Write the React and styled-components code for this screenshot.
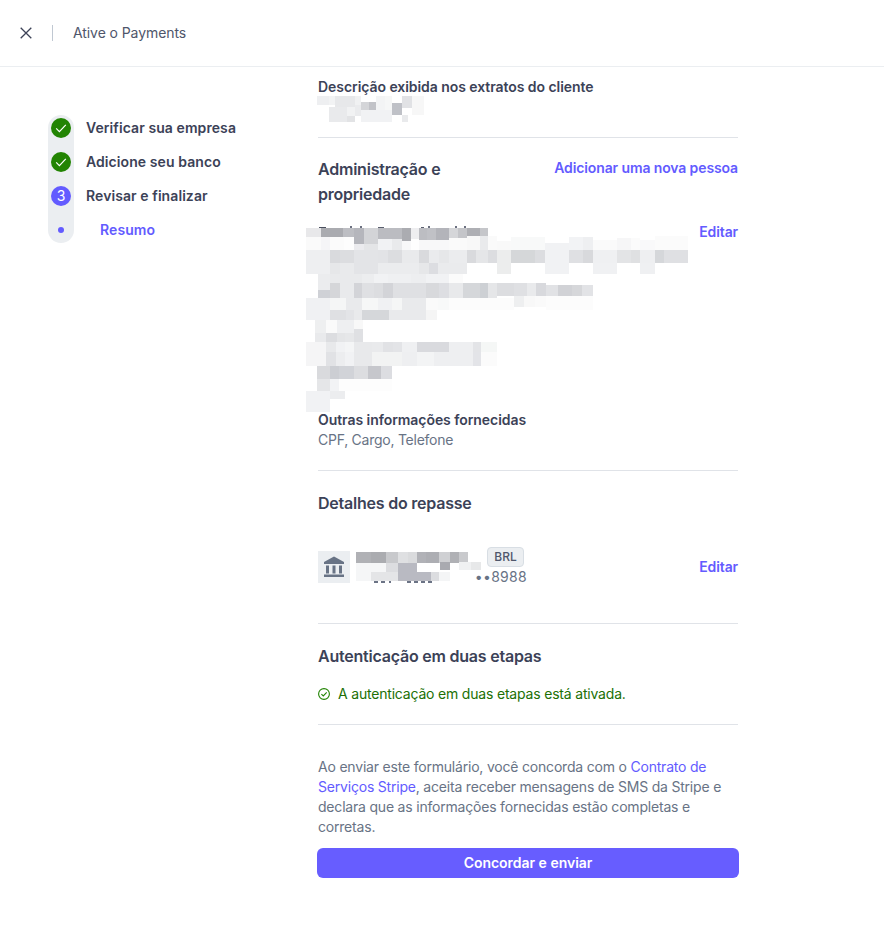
import React from "react";
import styled, { createGlobalStyle } from "styled-components";

// blurred areas of the screenshot: [y1, y2, [x1, x2, colour, y1?, y2?], ...] in page coordinates
const descBlur = [
  [96, 105, [317, 329, "#eeeff1"], [329, 335, "#f2f3f4"], [335, 355, "#e7e8ea", 96, 107], [355, 361, "#f0f1f2"], [376, 385, "#f3f4f5", 96, 110], [385, 392, "#f6f7f7", 96, 110], [402, 412, "#e1e2e5", 96, 108], [412, 424, "#f7f7f7", 96, 115]],
  [102, 110, [361, 369, "#d4d5d8"], [369, 376, "#c2c3c8"], [392, 402, "#bfc1c7", 103, 115]],
  [107, 122, [329, 347, "#e9eaec"], [347, 355, "#f1f2f3", 107, 116], [355, 361, "#eaebed", 105, 116], [361, 392, "#f1f2f4", 110, 122], [347, 355, "#e2e3e5", 116, 122], [402, 408, "#e9eaec", 115, 122]],
];

const personBlur = [
  [226, 228, [319, 326, "#4a4f5e", 227, 228], [350, 352, "#6b7080", 226, 228], [360, 362, "#6b7080", 226, 228], [378, 384, "#5a5f6e", 227, 228], [421, 424, "#5a5f6e", 227, 228], [428, 430, "#6b7080", 226, 228], [455, 457, "#6b7080", 226, 228], [464, 466, "#6b7080", 226, 228]],
  [228, 237, [306, 321, "#e8e8ea"], [321, 343, "#aaabb0"], [343, 354, "#bdbec3"], [354, 364, "#b5b6bc", 228, 244], [364, 378, "#d3d4d7", 228, 244], [378, 402, "#bbbcc1", 228, 239], [402, 411, "#abacb1", 228, 241], [411, 419, "#eeeef0", 228, 239], [419, 427, "#bcbdc2", 228, 240], [427, 436, "#c0c1c6", 228, 240], [436, 449, "#b3b4ba", 228, 240], [449, 458, "#d5d6d9", 228, 238], [458, 467, "#c4c5c9", 228, 238], [467, 480, "#aeafb4", 228, 236], [480, 488, "#c5c6ca", 228, 236]],
  [237, 250, [306, 321, "#fafafa"], [321, 330, "#f5f5f7"], [330, 344, "#fbfbfb"], [344, 354, "#fdfdfd"], [354, 364, "#ebebee", 244, 250], [364, 378, "#e4e5e7", 244, 250], [378, 392, "#f1f2f4", 239, 250], [392, 402, "#e9eaec", 239, 250], [402, 411, "#f8f8f9", 241, 250], [411, 419, "#fefefe", 239, 250], [419, 449, "#f8f8f9", 240, 250], [449, 467, "#fafafa", 238, 250], [467, 480, "#f8f8f8", 236, 250], [480, 488, "#e9eaec", 236, 250], [488, 497, "#fafafa", 236, 250], [497, 511, "#f9f9f9", 241, 250], [511, 545, "#f8f9f9"], [545, 569, "#f1f2f4", 243, 250], [569, 583, "#f2f3f5"], [583, 593, "#eeeff1"], [593, 617, "#fafafa", 240, 250], [617, 631, "#f6f6f7", 238, 250], [631, 640, "#fbfbfb", 238, 250], [640, 655, "#f9f9fa", 240, 250], [655, 688, "#fbfbfb", 236, 250]],
  [250, 263, [306, 330, "#eeeff1"], [330, 340, "#d9dadd"], [340, 354, "#dcdde0"], [354, 378, "#e3e4e7"], [378, 388, "#e2e3e6"], [388, 402, "#dcdde0"], [402, 419, "#e9eaec"], [419, 429, "#d9dadd"], [429, 439, "#eaebed"], [439, 449, "#e6e7e9"], [449, 467, "#ebecee"], [467, 476, "#d9dadd"], [476, 488, "#e5e6e8"], [488, 497, "#dcdde0"], [497, 511, "#eceded"], [511, 535, "#d5d7d9"], [535, 545, "#dcdde0"], [545, 569, "#f1f2f4"], [569, 583, "#dfe0e3"], [583, 593, "#d8d9dc"], [593, 617, "#eff0f2"], [617, 631, "#e3e4e6"], [631, 640, "#dfe0e2"], [640, 655, "#eeeff1"], [655, 664, "#d5d7da"], [664, 688, "#dfe0e3"]],
  [263, 274, [306, 330, "#eeeff1"], [330, 340, "#e6e7e9"], [340, 354, "#e9eaec"], [354, 378, "#e3e4e7"], [378, 419, "#ebecee"], [419, 429, "#e6e7e9"], [429, 438, "#dcdde1"], [438, 467, "#eaebed"], [497, 511, "#eceded"], [545, 569, "#f1f2f4"], [593, 617, "#f0f1f3"], [640, 655, "#eff0f2"]],
  [274, 283, [318, 330, "#ebecee", 274, 290], [330, 340, "#e9eaec"], [340, 362, "#e9eaec"], [362, 374, "#ecedef"], [374, 388, "#f1f2f4"], [388, 411, "#eff0f2"], [411, 426, "#edeef0"], [426, 449, "#f1f2f4"], [449, 463, "#fbfbfb"]],
  [283, 298, [318, 330, "#cfd1d6", 290, 298], [330, 340, "#d5d6d9"], [340, 354, "#e9eaec"], [354, 362, "#d3d4d8"], [362, 374, "#dfe0e3"], [374, 383, "#dcdde0"], [383, 393, "#d3d4d8"], [393, 426, "#dfe0e3"], [426, 439, "#d8d9dc"], [439, 449, "#dddee2"], [449, 463, "#e8e9eb"], [463, 480, "#d5d7da"], [480, 488, "#cdd0d4"], [488, 497, "#e5e6e8"], [497, 514, "#dcdde0", 283, 296], [514, 527, "#dfe0e3", 283, 296], [527, 536, "#e9eaec", 283, 296], [536, 546, "#d8d9dd", 283, 296], [546, 558, "#e1e2e5", 285, 296], [558, 572, "#d1d2d6", 285, 296], [572, 582, "#d6d7da", 285, 296], [582, 593, "#e2e3e6", 285, 296]],
  [298, 310, [306, 330, "#f0f1f3"], [330, 346, "#f5f6f6"], [346, 362, "#e9eaec"], [362, 378, "#f6f7f7"], [378, 392, "#f0f1f3"], [392, 402, "#f5f6f6"], [402, 426, "#e9eaec"], [426, 438, "#fafafa"], [438, 449, "#f8f9f9"], [449, 514, "#fcfcfc"], [514, 524, "#eeeff0", 296, 307], [524, 535, "#f8f8f8", 296, 307], [535, 546, "#fafafa", 296, 307], [546, 593, "#fcfcfc", 296, 310]],
  [310, 320, [306, 330, "#f0f1f3"], [330, 346, "#dfe0e3"], [346, 354, "#e3e4e7"], [354, 362, "#e9eaec"], [362, 389, "#d5d7da"], [389, 426, "#e9eaec"], [426, 437, "#f5f5f5"]],
  [320, 333, [315, 326, "#eeeff0"], [326, 337, "#fafafa"], [337, 354, "#eeeff1"], [354, 363, "#f8f8f8", 320, 329]],
  [333, 342, [315, 326, "#e9eaec"], [326, 337, "#dcdde0"], [337, 345, "#e4e5e7"], [345, 354, "#e6e7e9"], [354, 363, "#dfe0e3", 329, 342]],
  [342, 352, [306, 326, "#f5f5f6"], [326, 336, "#e8e9eb"], [336, 345, "#f1f2f4"], [345, 354, "#f4f5f6"], [354, 372, "#e8e9eb"], [372, 383, "#e9eaec"], [383, 393, "#e1e2e5"], [393, 402, "#e3e4e7"], [402, 417, "#eff0f2"], [417, 449, "#d9dade"], [449, 473, "#eeeff1"], [473, 481, "#e3e4e7"], [481, 497, "#f5f7f6"]],
  [352, 366, [306, 326, "#f5f5f6"], [326, 336, "#e1e2e5"], [336, 345, "#ecedef"], [345, 354, "#f1f2f4"], [354, 372, "#e8e9eb"], [372, 402, "#f2f3f3"], [402, 417, "#eeeff1"], [417, 434, "#f3f4f5"], [434, 473, "#eeeff1"], [473, 481, "#e3e4e8"], [481, 497, "#fbfbfb"]],
  [366, 379, [317, 330, "#d9dadd"], [330, 339, "#ccced3"], [339, 354, "#d1d3d8"], [354, 368, "#dcdde0"], [368, 381, "#c6c7cc"], [381, 392, "#dcdde1"]],
  [379, 391, [317, 330, "#e5e6e8"], [330, 339, "#f2f3f5"], [339, 392, "#fdfdfd"]],
  [391, 412, [306, 330, "#f1f2f4"], [330, 345, "#ecedef", 391, 399]],
];

const bankBlur = [
  [552, 563, [356, 371, "#b0b1b5"], [371, 386, "#abacb0"], [386, 398, "#c8c9cc"], [398, 408, "#dfe0e2"], [408, 417, "#dadbdd"], [417, 426, "#b1b2b7"], [426, 439, "#adaeb3"], [439, 450, "#cfd0d3"], [450, 459, "#b0b1b5"], [459, 468, "#c9cacd"]],
  [563, 572, [356, 386, "#f5f6f7"], [386, 398, "#dcdde0"], [398, 417, "#b9bac2"], [440, 450, "#a9aab0", 562, 570], [459, 471, "#f0f1f2", 562, 570], [471, 481, "#e7e8e9", 562, 570]],
  [572, 581, [356, 371, "#f5f6f7"], [371, 398, "#e4e5e7"], [398, 431, "#b9bac2"], [431, 439, "#dcdde0"], [439, 450, "#f4f5f6"]],
  [581, 583, [374, 378, "#6b7385"], [381, 385, "#6b7385"], [389, 391, "#6b7385"], [407, 411, "#6b7385"], [414, 418, "#6b7385"], [421, 425, "#6b7385"], [428, 432, "#6b7385"]],
];

const GlobalStyle = createGlobalStyle`
  html, body {
    margin: 0;
    padding: 0;
    background: #fff;
  }
  body {
    font-family: Inter, "Liberation Sans", sans-serif;
    font-size: 14px;
    line-height: 20px;
    color: #3c4257;
  }
`;

const Page = styled.div`
  width: 884px;
  height: 925px;
  overflow: hidden;
`;

const Header = styled.header`
  height: 66px;
  display: flex;
  align-items: center;
  border-bottom: 1px solid #ebeef1;
  padding-left: 20px;
`;

const CloseButton = styled.button`
  display: flex;
  width: 12px;
  height: 12px;
  padding: 0;
  border: 0;
  background: none;
  color: #3c4257;
`;

const HeaderDivider = styled.span`
  width: 1px;
  height: 16px;
  background: #c0c8d2;
  margin: 0 20px;
`;

const HeaderTitle = styled.span`
  color: #4f566b;
  letter-spacing: -0.08px;
`;

const Body = styled.div`
  display: flex;
`;

const Sidebar = styled.aside`
  width: 270px;
  flex: none;
  padding: 44px 0 0 48px;
  box-sizing: border-box;
`;

const Stepper = styled.ol`
  position: relative;
  list-style: none;
  margin: 0;
  padding: 0;

  &::before {
    content: "";
    position: absolute;
    left: 0;
    top: 4px;
    bottom: 4px;
    width: 26px;
    border-radius: 13px;
    background: #ebeef1;
  }
`;

const Step = styled.li`
  position: relative;
  height: 34px;
  display: flex;
  align-items: center;
  font-weight: 600;
  letter-spacing: 0.08px;
  color: ${p => (p.$active ? "#635bff" : "#3c4257")};
`;

const Marker = styled.span`
  width: 26px;
  flex: none;
  display: flex;
  justify-content: center;
  margin-right: ${p => (p.$sub ? "26px" : "12px")};
`;

const Badge = styled.span`
  width: 20px;
  height: 20px;
  border-radius: 50%;
  display: flex;
  align-items: center;
  justify-content: center;
  color: #fff;
  font-size: 14px;
  font-weight: 400;
  background: ${p => p.$color};
`;

const Dot = styled.span`
  width: 6px;
  height: 6px;
  border-radius: 50%;
  background: #635bff;
`;

const Content = styled.main`
  width: 420px;
  margin-left: 48px;
`;

const Section = styled.section`
  padding: ${p => p.$top || "20px"} 0 ${p => p.$bottom || "20px"};
  border-bottom: ${p => (p.$plain ? "0" : "1px solid #e0e3e8")};
`;

const FieldLabel = styled.div`
  font-weight: 600;
  letter-spacing: -0.06px;
`;

const FieldValue = styled.div`
  color: #687385;
  letter-spacing: -0.25px;
`;

const HeadingRow = styled.div`
  display: flex;
  justify-content: space-between;
  align-items: flex-start;
`;

const Heading = styled.h2`
  margin: 0;
  font-size: 16px;
  line-height: 25px;
  font-weight: 600;
  letter-spacing: -0.22px;
  color: #3c4257;
  max-width: ${p => p.$narrow || "none"};
`;

const ActionLink = styled.a`
  color: #635bff;
  font-weight: 600;
  letter-spacing: -0.12px;
  cursor: pointer;
  white-space: nowrap;
  margin-top: ${p => p.$nudge || "0"};
`;

const PersonRow = styled.div`
  display: flex;
  justify-content: space-between;
  margin: 15px 0 -2px;
`;

const BlurSvg = styled.svg`
  display: block;
  flex: none;
  shape-rendering: crispEdges;
  margin: ${p => p.$margin || "0"};
`;

const BankRow = styled.div`
  display: flex;
  align-items: center;
  margin-top: 31px;
`;

const BankIcon = styled.span`
  width: 32px;
  height: 32px;
  flex: none;
  display: flex;
  align-items: center;
  justify-content: center;
  background: #ebeef1;
  color: #687385;
`;

const BankInfo = styled.div`
  position: relative;
  width: 171px;
  margin-left: 6px;
  margin-right: auto;
`;

const BankOverlay = styled.div`
  position: absolute;
  left: 0;
  top: 5px;
`;

const BankName = styled.div`
  display: flex;
  justify-content: flex-end;
  padding-right: 3px;
`;

const Tag = styled.span`
  box-sizing: border-box;
  width: 37px;
  height: 20px;
  border: 1px solid #d8dee4;
  border-radius: 4px;
  background: #ebeef1;
  color: #4f566b;
  font-size: 12px;
  line-height: 18px;
  font-weight: 500;
  text-align: center;
`;

const BankNumber = styled.div`
  color: #687385;
  text-align: right;
  letter-spacing: 0.3px;
`;

const StatusRow = styled.div`
  display: flex;
  align-items: center;
  gap: 8px;
  margin-top: 15px;
  color: #217005;
  letter-spacing: -0.19px;
`;

const Legal = styled.p`
  margin: 0;
  color: #687385;
  letter-spacing: -0.2px;
`;

const LegalLink = styled.a`
  color: #635bff;
`;

const SubmitButton = styled.button`
  display: block;
  width: 422px;
  height: 30px;
  margin: 11px 0 0 -1px;
  border: 0;
  border-radius: 6px;
  background: #675dff;
  color: #fff;
  font: 600 14px/20px Inter, "Liberation Sans", sans-serif;
  letter-spacing: -0.02px;
  cursor: pointer;
`;

const Blur = ({ x, y, w, h, rows, margin }) => (
  <BlurSvg width={w} height={h} viewBox={`${x} ${y} ${w} ${h}`} $margin={margin}>
    {rows.flatMap(([y1, y2, ...cells], r) =>
      cells.map(([x1, x2, c, cy1, cy2], i) => (
        <rect
          key={`${r}-${i}`}
          x={x1}
          y={cy1 ?? y1}
          width={x2 - x1}
          height={(cy2 ?? y2) - (cy1 ?? y1)}
          fill={c}
        />
      ))
    )}
  </BlurSvg>
);

const CheckBadge = () => (
  <Badge $color="#228403">
    <svg width="12" height="12" viewBox="0 0 12 12" fill="none">
      <path d="M1.2 6.4 4.4 9.6 10.800 2.800" stroke="#fff" strokeWidth="1.2" />
    </svg>
  </Badge>
);

const App = () => {
  return (
    <Page>
      <GlobalStyle />
      <Header>
        <CloseButton aria-label="Fechar">
          <svg width="12" height="12" viewBox="0 0 12 12" fill="none">
            <path d="M.7.7l10.6 10.6M11.3.7.7 11.3" stroke="currentColor" strokeWidth="1.3" />
          </svg>
        </CloseButton>
        <HeaderDivider />
        <HeaderTitle>Ative o Payments</HeaderTitle>
      </Header>

      <Body>
        <Sidebar>
          <Stepper>
            <Step>
              <Marker><CheckBadge /></Marker>
              Verificar sua empresa
            </Step>
            <Step>
              <Marker><CheckBadge /></Marker>
              Adicione seu banco
            </Step>
            <Step>
              <Marker><Badge $color="#635bff">3</Badge></Marker>
              Revisar e finalizar
            </Step>
            <Step $active>
              <Marker $sub><Dot /></Marker>
              Resumo
            </Step>
          </Stepper>
        </Sidebar>

        <Content>
          <Section $top="10px" $bottom="14px">
            <FieldLabel>Descrição exibida nos extratos do cliente</FieldLabel>
            <Blur x={317} y={96} w={107} h={27} rows={descBlur} margin="-1px 0 0 -1px" />
          </Section>

          <Section $top="19px">
            <HeadingRow>
              <Heading $narrow="170px">Administração e propriedade</Heading>
              <ActionLink $nudge="1px">Adicionar uma nova pessoa</ActionLink>
            </HeadingRow>
            <PersonRow>
              <Blur x={306} y={226} w={382} h={186} rows={personBlur} margin="4px 0 0 -12px" />
              <ActionLink>Editar</ActionLink>
            </PersonRow>
            <FieldLabel>Outras informações fornecidas</FieldLabel>
            <FieldValue>CPF, Cargo, Telefone</FieldValue>
          </Section>

          <Section $bottom="36px">
            <Heading>Detalhes do repasse</Heading>
            <BankRow>
              <BankIcon>
                <svg width="22" height="22" viewBox="0 0 22 22" fill="currentColor">
                  <path d="M11 .5 21 6v2H1V6z" />
                  <path d="M3 9.500h3v8H3zM9.500 9.500h3v8h-3zM16 9.500h3v8h-3zM1 18.500h20V21H1z" />
                </svg>
              </BankIcon>
              <BankInfo>
                <BankName><Tag>BRL</Tag></BankName>
                <BankNumber>••8988</BankNumber>
                <BankOverlay>
                  <Blur x={356} y={552} w={126} h={31} rows={bankBlur} />
                </BankOverlay>
              </BankInfo>
              <ActionLink>Editar</ActionLink>
            </BankRow>
          </Section>

          <Section>
            <Heading>Autenticação em duas etapas</Heading>
            <StatusRow>
              <svg width="12" height="12" viewBox="0 0 12 12" fill="none" stroke="#228403" strokeWidth="1.1">
                <circle cx="6" cy="6" r="5.4" />
                <path d="M3.4 6.1 5.3 8 8.700 4.400" />
              </svg>
              A autenticação em duas etapas está ativada.
            </StatusRow>
          </Section>

          <Section $top="32px" $plain>
            <Legal>
              Ao enviar este formulário, você concorda com o <LegalLink>Contrato de Serviços Stripe</LegalLink>, aceita receber mensagens de SMS da Stripe e declara que as informações fornecidas estão completas e corretas.
            </Legal>
            <SubmitButton>Concordar e enviar</SubmitButton>
          </Section>
        </Content>
      </Body>
    </Page>
  );
};

export default App;
